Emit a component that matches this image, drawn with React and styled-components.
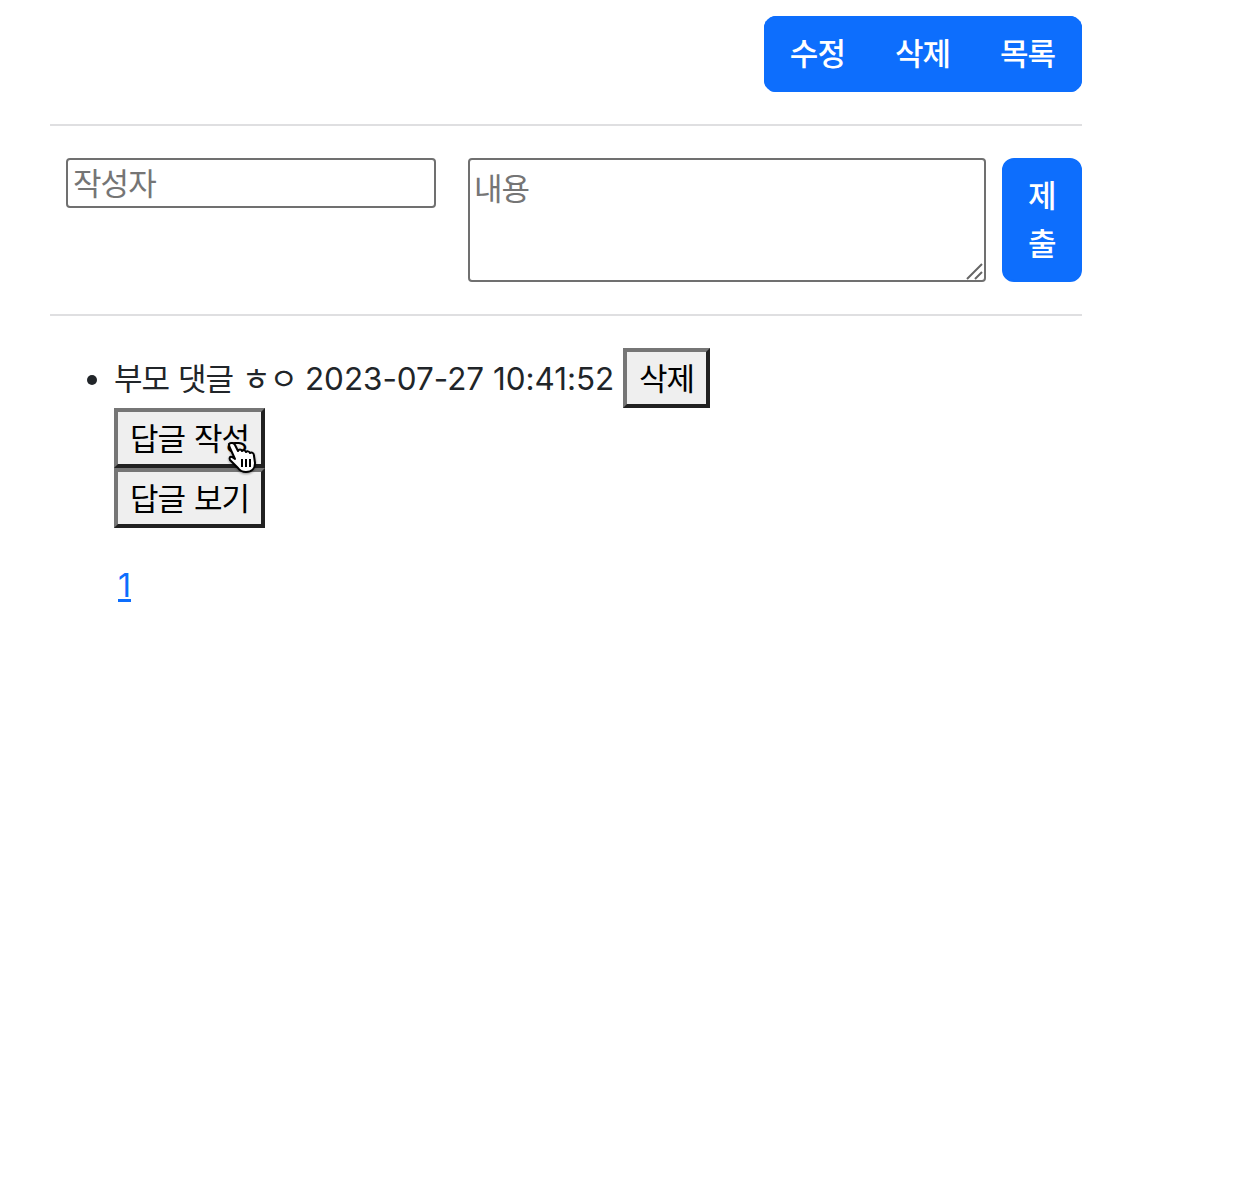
import React from "react";
import styled, { createGlobalStyle } from "styled-components";

const GlobalStyle = createGlobalStyle`
  * { box-sizing: border-box; }
  body {
    margin: 0;
    background: #fff;
    color: #212529;
    font-family: "Noto Sans CJK KR", Inter, sans-serif;
    font-size: 31px;
    line-height: 48px;
    letter-spacing: -1px;
    word-spacing: 3px;
  }
`;

const Page = styled.div`
  width: 1032px;
  margin-left: 50px;
  padding-top: 16px;
`;

const Toolbar = styled.div`
  display: flex;
  justify-content: flex-end;
`;

const ButtonGroup = styled.div`
  display: inline-flex;
  border-radius: 12px;
  overflow: hidden;
`;

const BlueButton = styled.button`
  border: 2px solid #0d6efd;
  background: #0d6efd;
  color: #fff;
  font: inherit;
  font-weight: 500;
  letter-spacing: inherit;
  padding: 10px 24px 14px;
  ${(p) => p.$grouped && "margin-left: -2px; &:first-child { margin-left: 0; } &:last-child { padding-right: 25px; }"}
  ${(p) => !p.$grouped && "border-radius: 12px; width: 80px; flex: none; padding-right: 25px;"}
`;

const Rule = styled.hr`
  height: 2px;
  margin: 32px 0;
  border: 0;
  background: #dfdfe1;
`;

const CommentForm = styled.form`
  display: flex;
  align-items: flex-start;
  padding-left: 16px;
`;

const NameInput = styled.input`
  width: 370px;
  height: 50px;
  margin-right: 32px;
  padding: 0 4px 4px 5px;
  border: 2px solid #707070;
  border-radius: 4px;
  font: inherit;
  line-height: normal;
  letter-spacing: -0.9px;
  color: #212529;
  &::placeholder { color: #757575; }
`;

const BodyWrap = styled.div`
  position: relative;
  width: 518px;
  height: 124px;
  margin-right: 16px;
  flex: none;
`;

const BodyInput = styled.textarea`
  display: block;
  width: 100%;
  height: 100%;
  padding: 4px;
  border: 2px solid #707070;
  border-radius: 4px;
  font: inherit;
  line-height: normal;
  letter-spacing: -0.9px;
  resize: none;
  &::placeholder { color: #757575; }
`;

const ResizeGrip = styled.svg`
  position: absolute;
  right: 2px;
  bottom: 2px;
  width: 18px;
  height: 18px;
  pointer-events: none;
`;

const CommentList = styled.ul`
  margin: 0 0 32px;
  padding-left: 64px;
  list-style: none;
`;

const CommentItem = styled.li`
  position: relative;

  &::before {
    content: "";
    position: absolute;
    left: -27px;
    top: 27px;
    width: 10px;
    height: 10px;
    border-radius: 50%;
    background: #212529;
  }
`;

const Meta = styled.span`
  margin-left: -1px;
  font-family: Inter, sans-serif;
  font-size: 31.4px;
  letter-spacing: 0;
  word-spacing: 0;
`;

const GreyButton = styled.button`
  display: ${(p) => (p.$block ? "block" : "inline-block")};
  height: 60px;
  padding: 1px 12px 3px;
  border: 4px outset #767676;
  background: #efefef;
  color: #000;
  font: inherit;
  letter-spacing: inherit;
  word-spacing: inherit;
`;

const ButtonWrap = styled.div`
  position: relative;
  width: fit-content;
`;

const Cursor = styled.svg`
  position: absolute;
  left: 112px;
  top: 33px;
  width: 32px;
  height: 32px;
  filter: drop-shadow(0 1px 1px rgba(0, 0, 0, 0.4));
`;

const Pager = styled.div`
  padding-left: 68px;
`;

const PageLink = styled.a`
  color: #0d6efd;
  font-family: Inter, sans-serif;
  font-size: 32px;
  letter-spacing: 0;
  text-decoration: underline;
`;

const HandCursor = () => (
  <Cursor viewBox="0 0 32 32">
    <path
      d="M3 3c2-2 5-1 6 1l3 6c1-2 3-2 4 0 1-1 3-1 4 1 1-1 3-1 4 1 2-1 4 0 4 3l1 7c0 5-3 9-9 9-4 0-6-1-8-4l-8-8c-1-2 0-4 2-3l3 2-5-11c-1-2-1-3-1-4z"
      fill="#fff"
      stroke="#000"
      strokeWidth="2"
      strokeLinejoin="round"
    />
    <path d="M16 18v8M20 18v8M24 18v8" stroke="#000" strokeWidth="2" fill="none" />
  </Cursor>
);

export default function App() {
  return (
    <Page>
      <GlobalStyle />
      <Toolbar>
        <ButtonGroup>
          <BlueButton $grouped type="button">수정</BlueButton>
          <BlueButton $grouped type="button">삭제</BlueButton>
          <BlueButton $grouped type="button">목록</BlueButton>
        </ButtonGroup>
      </Toolbar>
      <Rule />
      <CommentForm onSubmit={(e) => e.preventDefault()}>
        <NameInput placeholder="작성자" />
        <BodyWrap>
          <BodyInput placeholder="내용" />
          <ResizeGrip viewBox="0 0 18 18">
            <path d="M1 17L16 2M9 17l7-7" stroke="#666" strokeWidth="2" fill="none" />
          </ResizeGrip>
        </BodyWrap>
        <BlueButton type="submit">제출</BlueButton>
      </CommentForm>
      <Rule />
      <CommentList>
        <CommentItem>
          부모 댓글 ㅎㅇ <Meta>2023-07-27 10:41:52 </Meta>
          <GreyButton type="button">삭제</GreyButton>
          <ButtonWrap>
            <GreyButton $block type="button">답글 작성</GreyButton>
            <HandCursor />
          </ButtonWrap>
          <GreyButton $block type="button">답글 보기</GreyButton>
        </CommentItem>
      </CommentList>
      <Pager>
        <PageLink href="#">1</PageLink>
      </Pager>
    </Page>
  );
}
